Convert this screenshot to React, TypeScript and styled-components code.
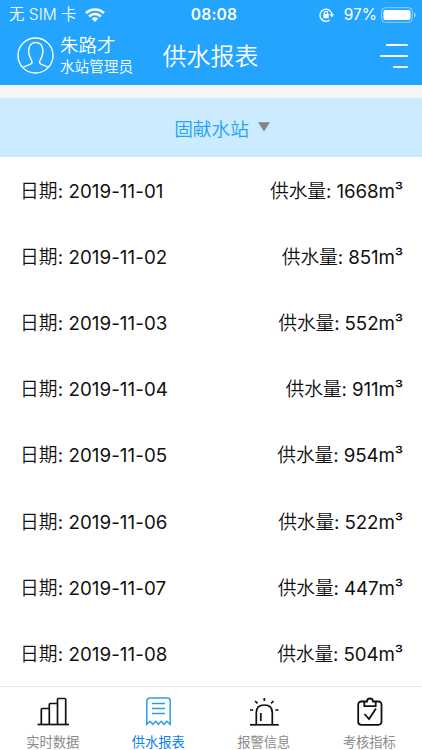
import React from "react";
import styled, { createGlobalStyle } from "styled-components";

const GlobalStyle = createGlobalStyle`
  * { box-sizing: border-box; }
  body {
    margin: 0;
    background: #fff;
    font-family: Inter, "Noto Sans CJK SC", sans-serif;
  }
`;

const Screen = styled.div`
  width: 422px;
  height: 750px;
  display: flex;
  flex-direction: column;
  overflow: hidden;
  white-space: nowrap;
`;

const Top = styled.header`
  height: 85px;
  flex: none;
  background: #22a4ff;
  color: #fff;
`;

const StatusBar = styled.div`
  height: 28px;
  display: grid;
  grid-template-columns: 1fr auto 1fr;
  align-items: center;
  padding: 0 6px 0 9px;
  font-size: 16px;
  line-height: 28px;
`;

const StatusGroup = styled.div<{ $end?: boolean }>`
  display: flex;
  align-items: center;
  justify-content: ${(p) => (p.$end ? "flex-end" : "flex-start")};
`;

const Carrier = styled.span`
  font-size: 15.5px;
  font-weight: 350;
  margin-right: 8px;
  padding-top: 1px;
`;

const Clock = styled.span`
  font-size: 15.6px;
  font-weight: 600;
  letter-spacing: 0.2px;
  margin-left: 3px;
`;

const Percent = styled.span`
  font-size: 15.5px;
  margin: 0 4px 0 9px;
`;

const NavBar = styled.div`
  height: 57px;
  display: grid;
  grid-template-columns: 1fr auto 1fr;
  padding: 0 14px 0 17px;
`;

const User = styled.div`
  display: flex;
  gap: 6px;
  padding-top: 9px;
`;

const UserText = styled.div`
  display: flex;
  flex-direction: column;
  margin-top: -4px;
  font-weight: 350;
`;

const UserName = styled.span`
  font-size: 18.5px;
  line-height: 24px;
`;

const UserRole = styled.span`
  font-size: 14.6px;
  line-height: 21px;
`;

const Title = styled.h1`
  margin: 0 2px 0 -2px;
  font-size: 24px;
  font-weight: 350;
  line-height: 57px;
`;

const MenuButton = styled.button`
  border: 0;
  padding: 16px 0 0;
  background: none;
  display: flex;
  flex-direction: column;
  align-items: flex-end;
  gap: 9px;
`;

const MenuLine = styled.span<{ $width: number }>`
  width: ${(p) => p.$width}px;
  height: 2px;
  border-radius: 1px;
  background: #fff;
`;

const StationSelect = styled.div`
  flex: none;
  height: 59px;
  margin-top: 13px;
  padding: 0 0 1px 22px;
  background: #cdebff;
  color: #22a4f5;
  display: flex;
  align-items: center;
  justify-content: center;
  gap: 9px;
  font-size: 18.7px;
  font-weight: 350;
  box-shadow: 0 -13px 0 #f5f5f5;
`;

const Rows = styled.main`
  flex: 1;
  min-height: 0;
  overflow: hidden;
  background: #fff;
  color: #111;
`;

const Row = styled.div`
  height: 66.1px;
  padding: 0 19px 1px 20px;
  display: flex;
  align-items: center;
  justify-content: space-between;
  font-size: 18.75px;
`;

const Label = styled.span`
  font-weight: 350;
`;

const DateText = styled.span`
  letter-spacing: 0.06px;
`;

const Volume = styled.span`
  letter-spacing: -0.12px;
`;

const TabBar = styled.nav`
  flex: none;
  height: 64px;
  border-top: 1px solid #e8e8e8;
  background: #fff;
  display: grid;
  grid-template-columns: repeat(4, 1fr);
`;

const Tab = styled.div<{ $active?: boolean }>`
  display: flex;
  flex-direction: column;
  align-items: center;
  padding-top: 8px;
  color: ${(p) => (p.$active ? "#087ff5" : "#8a8a8a")};
  font-size: 13.3px;
  font-weight: 400;
  line-height: 20px;
  svg { display: block; margin-bottom: 3px; }
`;

const WifiIcon = () => (
  <svg width="20" height="14" viewBox="0 0 20 14">
    <g fill="none" stroke="#fff" strokeWidth="2.5">
      <path d="M1 5.2a12.8 12.8 0 0 1 18 0" />
      <path d="M4.1 8.5a8.4 8.4 0 0 1 11.8 0" />
    </g>
    <path d="M6.6 10.6a4.8 4.8 0 0 1 6.8 0L10 14z" fill="#fff" />
  </svg>
);

const LockIcon = () => (
  <svg width="16" height="14" viewBox="0 0 16 14" fill="none" stroke="#fff" strokeWidth="1.3">
    <path d="M10.6 12.1A6 6 0 1 1 13 7" />
    <path d="M10.4 6.3h4.8L12.8 9.2z" fill="#fff" stroke="none" />
    <rect x="4.3" y="6" width="5.4" height="4.2" rx=".5" fill="#fff" stroke="none" />
    <path d="M5.4 6V4.9a1.6 1.6 0 0 1 3.2 0V6" />
  </svg>
);

const BatteryIcon = () => (
  <svg width="35" height="16" viewBox="0 0 35 16">
    <rect x=".7" y=".7" width="30.6" height="14.6" rx="3.8" fill="none" stroke="#fff" strokeOpacity=".5" />
    <rect x="2.4" y="2.9" width="27.2" height="10.2" rx="2" fill="#fff" />
    <path d="M33 5.5q1.7.6 1.7 2.5T33 10.5z" fill="#fff" fillOpacity=".55" />
  </svg>
);

const AvatarIcon = () => (
  <svg width="37" height="37" viewBox="0 0 37 37" fill="none" stroke="#fff" strokeWidth="1.4">
    <circle cx="18.5" cy="18.5" r="17.5" />
    <path d="M6 30.5c2.500-2.200 8.500-2.400 9.100-4.900.4-2.300-3.300-5.100-3.400-10.400C11.500 8.500 14 5.500 18.800 5.500s7.300 3 7.100 9.700c-.1 5.300-3.800 8.100-3.400 10.400.6 2.500 6.500 2.700 8.800 4.900" />
  </svg>
);

const CaretIcon = () => (
  <svg width="12" height="10" viewBox="0 0 12 10">
    <path d="M0 .2h12L6 9.600z" fill="#848484" />
  </svg>
);

const iconProps = { width: 34, height: 34, viewBox: "0 0 34 34", fill: "none", strokeWidth: 1.7 };

const ChartIcon = () => (
  <svg {...iconProps} stroke="#111">
    <path d="M1.500 29.500h31.500" />
    <path d="M5.300 29.500v-15a1 1 0 0 1 1-1h7v16M13.300 13.500v-4a1 1 0 0 1 1-1h7.200v21M21.500 8.500v-4a1 1 0 0 1 1-1h6.200a1 1 0 0 1 1 1v25" />
  </svg>
);

const ReceiptIcon = () => (
  <svg {...iconProps} stroke="#2a9fe8" strokeWidth={1.500}>
    <path d="M5.800 29.300V6a3 3 0 0 1 3-3h17.400a3 3 0 0 1 3 3v23.300l-3.400-3-2.800 3-2.800-3-2.800 3-2.800-3-2.800 3-2.800-3z" />
    <path d="M11 8.600h13M11 13.500h13M11 18.500h13" />
  </svg>
);

const AlarmIcon = () => (
  <svg {...iconProps} stroke="#111">
    <path d="M3 29.800h28.800" />
    <path d="M9.300 29.800V17.500q0-7.500 8-7.500t8 7.500v12.300M13.800 18v8M17.300 3v3M8.100 6l2.400 2.400M26.500 6l-2.400 2.400M3 15h3.200M28.300 15h3.200" />
  </svg>
);

const ClipboardIcon = () => (
  <svg {...iconProps} stroke="#111" strokeWidth={1.800}>
    <path d="M12 6.500H9.200a3 3 0 0 0-3 3v17.300a3 3 0 0 0 3 3h17.300a3 3 0 0 0 3-3V9.500a3 3 0 0 0-3-3H24" />
    <path d="M12.300 6.500h2.700a3 3 0 0 1 6 0h2.700v4.700H12.300zM12.500 19l4.500 5 7-10.500" />
  </svg>
);

const readings = [
  ["2019-11-01", 1668],
  ["2019-11-02", 851],
  ["2019-11-03", 552],
  ["2019-11-04", 911],
  ["2019-11-05", 954],
  ["2019-11-06", 522],
  ["2019-11-07", 447],
  ["2019-11-08", 504],
] as const;

export default function App() {
  return (
    <Screen>
      <GlobalStyle />
      <Top>
        <StatusBar>
          <StatusGroup>
            <Carrier>无 SIM 卡</Carrier>
            <WifiIcon />
          </StatusGroup>
          <Clock>08:08</Clock>
          <StatusGroup $end>
            <LockIcon />
            <Percent>97%</Percent>
            <BatteryIcon />
          </StatusGroup>
        </StatusBar>
        <NavBar>
          <User>
            <AvatarIcon />
            <UserText>
              <UserName>朱路才</UserName>
              <UserRole>水站管理员</UserRole>
            </UserText>
          </User>
          <Title>供水报表</Title>
          <MenuButton aria-label="菜单">
            <MenuLine $width={22} />
            <MenuLine $width={28} />
            <MenuLine $width={15} />
          </MenuButton>
        </NavBar>
      </Top>
      <StationSelect>
        固献水站
        <CaretIcon />
      </StationSelect>
      <Rows>
        {readings.map(([date, volume]) => (
          <Row key={date}>
            <DateText><Label>日期</Label>: {date}</DateText>
            <Volume><Label>供水量</Label>: {volume}m³</Volume>
          </Row>
        ))}
      </Rows>
      <TabBar>
        <Tab><ChartIcon />实时数据</Tab>
        <Tab $active><ReceiptIcon />供水报表</Tab>
        <Tab><AlarmIcon />报警信息</Tab>
        <Tab><ClipboardIcon />考核指标</Tab>
      </TabBar>
    </Screen>
  );
}
